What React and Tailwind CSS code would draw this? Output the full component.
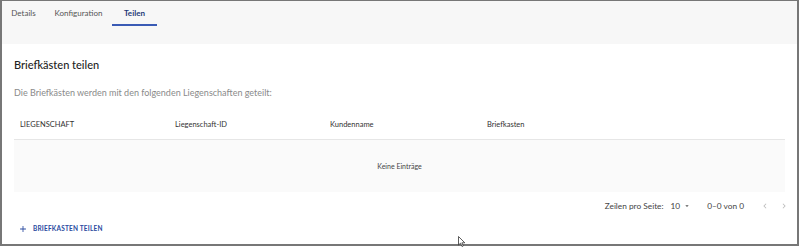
import React from "react";

export default function App() {
  const font = { fontFamily: "Lato, 'Open Sans', sans-serif" };
  return (
    <div className="w-[800px] h-[247px] bg-white relative" style={font}>
      <div className="w-[799px] h-[246px] border-t border-l-2 border-r-2 border-b-2 border-[#777777] flex flex-col overflow-hidden">
        {/* Tabs area */}
        <div className="h-[43px] shrink-0 bg-[#f7f7f7] flex items-start">
          <div className="flex h-[25px]">
            <div className="w-[43px] flex items-center justify-center pb-[2px] text-[8px] text-[#555]">Details</div>
            <div className="w-[67px] flex items-center justify-center pb-[2px] text-[8px] text-[#555]">Konfiguration</div>
            <div className="w-[45px] flex items-center justify-center text-[8px] text-[#1e3a78] font-bold border-b-2 border-[#3a5bb5]">Teilen</div>
          </div>
        </div>
        {/* Card */}
        <div className="flex-1 bg-white px-3 flex flex-col">
          <div className="h-[43px] shrink-0 flex items-center text-[11px] text-[#222] font-medium">Briefkästen teilen</div>
          <div className="h-[12px] shrink-0 flex items-center text-[9px] text-[#8a8a8a]">Die Briefkästen werden mit den folgenden Liegenschaften geteilt:</div>
          <div className="h-[11px] shrink-0" />
          <div className="flex h-[30px] shrink-0 items-center border-b border-[#e6e6e6] text-[7.5px] text-[#333] px-[6px]">
            <div className="w-[155px]">LIEGENSCHAFT</div>
            <div className="w-[155px]">Liegenschaft-ID</div>
            <div className="w-[157px]">Kundenname</div>
            <div className="w-[155px]">Briefkasten</div>
          </div>
          <div className="h-[52px] shrink-0 bg-[#fafafa] flex items-center justify-center text-[7px] text-[#444]">Keine Einträge</div>
          <div className="h-[28px] shrink-0 flex items-center justify-end text-[8.3px] text-[#444] mr-[-4px]">
            <span>Zeilen pro Seite:</span>
            <span className="ml-[7px] flex items-center">10
              <svg width="8" height="8" viewBox="0 0 24 24" className="ml-[3px]"><path d="M7 10l5 5 5-5z" fill="#555" /></svg>
            </span>
            <span className="ml-[16px]">0–0 von 0</span>
            <span className="ml-[16px] flex items-center gap-[9px]">
              <svg width="10" height="10" viewBox="0 0 24 24"><path d="M15.4 7.4L14 6l-6 6 6 6 1.4-1.4L10.8 12z" fill="#bbb" /></svg>
              <svg width="10" height="10" viewBox="0 0 24 24"><path d="M10 6L8.6 7.4 13.2 12l-4.6 4.6L10 18l6-6z" fill="#bbb" /></svg>
            </span>
          </div>
          <div className="h-[18px] shrink-0 flex items-center pl-[4px] text-[6.5px] font-bold text-[#2a4aa0] tracking-[0.2px]">
            <svg width="10" height="10" viewBox="0 0 24 24" className="mr-[5px]"><path d="M19 13h-6v6h-2v-6H5v-2h6V5h2v6h6z" fill="#2a4aa0" /></svg>
            BRIEFKASTEN TEILEN
          </div>
        </div>
      </div>
      {/* mouse cursor */}
      <svg className="absolute left-[458px] top-[236px]" width="8" height="11" viewBox="0 0 8 11">
        <path d="M0.5 0.5 L0.5 9 L2.5 7.2 L4 10.5 L5.3 9.9 L3.9 6.8 L6.8 6.8 Z" fill="#fff" stroke="#333" strokeWidth="0.8" />
      </svg>
    </div>
  );
}
